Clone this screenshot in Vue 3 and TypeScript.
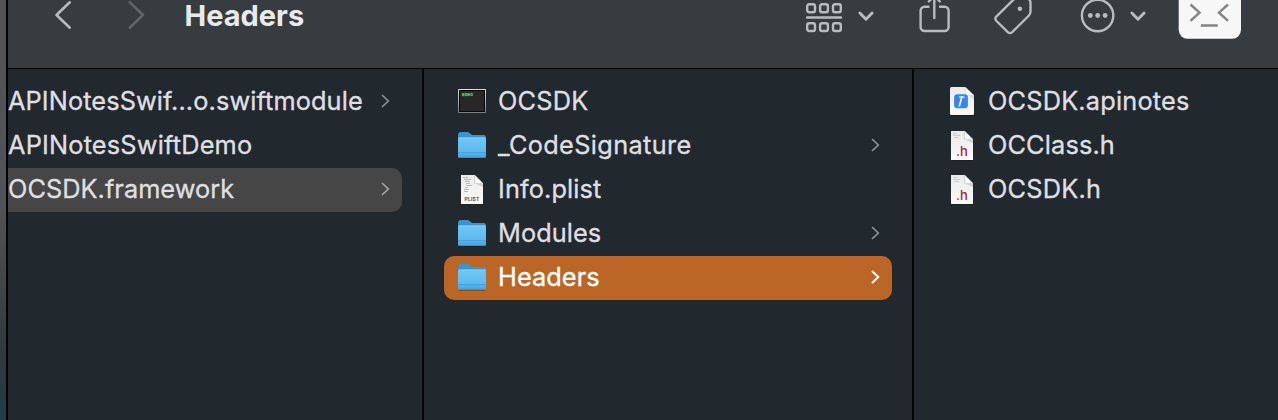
<script setup lang="ts">
type IconKind = 'exec' | 'folder' | 'plist' | 'api' | 'header'

interface Entry {
  name: string
  icon?: IconKind
  arrow?: boolean
  state?: 'path' | 'active'
  spacing: number
}

const columns: { id: string; entries: Entry[] }[] = [
  {
    id: 'first',
    entries: [
      { name: 'APINotesSwif...o.swiftmodule', arrow: true, spacing: 0.11 },
      { name: 'APINotesSwiftDemo', spacing: 0.2 },
      { name: 'OCSDK.framework', arrow: true, state: 'path', spacing: 0.05 },
    ],
  },
  {
    id: 'second',
    entries: [
      { name: 'OCSDK', icon: 'exec', spacing: 0.25 },
      { name: '_CodeSignature', icon: 'folder', arrow: true, spacing: 0.36 },
      { name: 'Info.plist', icon: 'plist', spacing: 0.12 },
      { name: 'Modules', icon: 'folder', arrow: true, spacing: 0.06 },
      { name: 'Headers', icon: 'folder', arrow: true, state: 'active', spacing: 0.08 },
    ],
  },
  {
    id: 'third',
    entries: [
      { name: 'OCSDK.apinotes', icon: 'api', spacing: 0.21 },
      { name: 'OCClass.h', icon: 'header', spacing: 0.15 },
      { name: 'OCSDK.h', icon: 'header', spacing: 0.25 },
    ],
  },
]
</script>

<template>
  <div class="desktop">
    <svg class="defs" width="0" height="0" aria-hidden="true">
      <defs>
        <linearGradient id="folderFront" x1="0" y1="0" x2="0" y2="1">
          <stop offset="0" stop-color="#72c8f7" />
          <stop offset=".7" stop-color="#5db9ee" />
          <stop offset="1" stop-color="#439fd8" />
        </linearGradient>
        <linearGradient id="paper" x1="0" y1="0" x2="0" y2="1">
          <stop offset="0" stop-color="#eaeaea" />
          <stop offset="1" stop-color="#fafafa" />
        </linearGradient>
        <linearGradient id="bezel" x1="0" y1="0" x2="0" y2="1">
          <stop offset="0" stop-color="#d5e0e3" />
          <stop offset="1" stop-color="#7b7f80" />
        </linearGradient>
      </defs>
    </svg>
    <div class="window">
      <header class="toolbar">
        <svg class="nav back" width="20" height="32" viewBox="0 0 20 32"><path d="M15.8 2.3 2.500 15l13.3 12.7" /></svg>
        <svg class="nav forward" width="20" height="32" viewBox="0 0 20 32"><path d="M3.7 2.3 17 15 3.7 27.7" /></svg>
        <h1 class="title">Headers</h1>
        <svg class="tool group" width="70" height="36" viewBox="0 0 70 36">
          <rect x="1.2" y="4.2" width="7.8" height="8" rx="2" />
          <rect x="14.1" y="4.2" width="7.8" height="8" rx="2" />
          <rect x="27" y="4.2" width="7.8" height="8" rx="2" />
          <path d="M1 17.5h34" />
          <rect x="1.2" y="23.2" width="7.8" height="7.8" rx="2" />
          <rect x="14.1" y="23.2" width="7.8" height="7.8" rx="2" />
          <rect x="27" y="23.2" width="7.8" height="7.8" rx="2" />
          <path class="caret" d="m53.9 13 6.1 6.2 6.1-6.2" />
        </svg>
        <svg class="tool share" width="32" height="36" viewBox="0 0 32 36">
          <path d="M9.5 6.8H5.6A4 4 0 0 0 1.6 10.8V27a4 4 0 0 0 4 4h20a4 4 0 0 0 4-4V10.800a4 4 0 0 0-4-4H21M15.300 18V-4M9.800 1.500l5.500-5.500 5.500 5.500" />
        </svg>
        <svg class="tool tag" width="42" height="36" viewBox="0 0 42 36">
          <path d="M3.500 16.300 20.800-.6Q23-2.500 26-2.500h5.500Q37.500-2 37.500 3v8.500q0 2.500-2 4.500L19.200 32.100q-2.200 2-4.400 0L3.500 21q-2.200-2.300 0-4.700Z" />
          <circle class="dot" cx="26.900" cy="8.700" r="2.300" />
        </svg>
        <svg class="tool more" width="70" height="36" viewBox="0 0 70 36">
          <circle cx="17.600" cy="15.500" r="15.700" />
          <circle class="dot" cx="10.300" cy="15.500" r="2.400" />
          <circle class="dot" cx="17.700" cy="15.500" r="2.400" />
          <circle class="dot" cx="25.100" cy="15.500" r="2.400" />
          <path class="caret" d="m51.900 13 6.100 6.200 6.100-6.200" />
        </svg>
        <svg class="terminal" width="64" height="42" viewBox="0 0 64 42">
          <rect x=".7" y="-16" width="62.300" height="54.800" rx="9" fill="#f7f7f7" />
          <path d="m12.500 4.500 9 8.200-9 8.200M50 4.500l-9 8.200 9 8.200M22.800 25.500h17" />
        </svg>
      </header>
      <main class="browser">
        <section v-for="column in columns" :key="column.id" class="column" :class="column.id">
          <div v-for="entry in column.entries" :key="entry.name" class="row" :class="entry.state">
            <svg v-if="entry.icon" class="icon" width="32" height="32" viewBox="0 0 32 32">
              <g v-if="entry.icon === 'exec'">
                <rect x="2" y="4" width="28" height="24" rx=".7" fill="url(#bezel)" />
                <rect x="3" y="5" width="26" height="22" fill="#080808" />
                <rect x="4" y="6" width="24" height="20" fill="#272727" />
                <text x="5.700" y="10.900" class="exec-text">exec</text>
              </g>
              <g v-else-if="entry.icon === 'folder'">
                <path class="shadow" d="M3 29.300h26" />
                <path d="M2 5.500Q2 3 4.300 3h7.100q1 0 1.800.7l1.800 1.600q.8.600 2 .600h10.500Q30 5.900 30 8.400V20H2Z" fill="#3a94cf" />
                <path d="M2 10.200Q2 8.500 3.700 8.500h24.600Q30 8.500 30 10.200v16.900Q30 29 28.100 29H3.900Q2 29 2 27.100Z" fill="url(#folderFront)" />
                <path d="M2.400 9h27.200" stroke="#8bd4fa" stroke-width=".7" />
                <path d="M2 23.500h28" stroke="#45a2dc" stroke-width="1" />
                <path d="M2 28.500h28" stroke="#378cc3" stroke-width=".7" />
              </g>
              <g v-else-if="entry.icon === 'api'">
                <path class="shadow" d="M5 30.400h22" />
                <path d="M5.500 2h13.500L28 10.500v18Q28 30 26.500 30h-21Q4 30 4 28.500v-25Q4 2 5.500 2Z" fill="url(#paper)" />
                <path d="M19 6.500 28 11v4Z" fill="#d8d8d8" />
                <path d="M19.500 2.200 28 10.500h-8.500Z" fill="#fcfcfc" stroke="#c4c4c4" stroke-width=".4" />
                <rect x="8.100" y="9.200" width="13.800" height="14" rx="3.300" fill="#3884ed" />
                <path d="m15.900 12-2.500 8.800" stroke="#fff" stroke-width="1.700" stroke-linecap="round" />
                <path d="M13 12.300q2.500-1.300 5.800.1" stroke="#d5e5fb" stroke-width="1.100" fill="none" />
              </g>
              <g v-else>
                <path class="shadow" d="M5 31h22" />
                <path d="M5 2h13.600L27 10.400V31H5Z" fill="url(#paper)" />
                <path d="M18 2.600 27 11v3l-9-4Z" fill="#cfcfcf" />
                <path d="M18.600 2 27 10.400h-8.400Z" fill="#fcfcfc" stroke="#bababa" stroke-width=".4" />
                <g v-if="entry.icon === 'plist'">
                  <path d="M7 4.500h5M8 6.500h7M9 8.500h5M10 10.500h4M10 12.500h6M9 14.500h3M8 16.500h5M8 18.500h4" stroke="#b0b0b0" stroke-width=".9" />
                  <text x="16" y="28" text-anchor="middle" class="plist-text">PLIST</text>
                </g>
                <g v-else>
                  <path d="M7 4.500h4M7 6.500h7M8 8.500h5" stroke="#c6c6c6" stroke-width=".8" />
                  <text x="16" y="27" text-anchor="middle" class="header-text">.h</text>
                </g>
              </g>
            </svg>
            <span class="name" :style="{ letterSpacing: entry.spacing + 'px' }">{{ entry.name }}</span>
            <svg v-if="entry.arrow" class="arrow" width="10" height="16" viewBox="0 0 10 16"><path d="m2.500 2.500 5.800 5.500-5.800 5.500" /></svg>
          </div>
        </section>
      </main>
    </div>
  </div>
</template>

<style>
body { background: #21282e; overflow: hidden; }
</style>

<style scoped>
.desktop {
  box-sizing: border-box;
  width: 1278px;
  height: 420px;
  padding-left: 6px;
  overflow: hidden;
  background: linear-gradient(#505355 0, #505355 210px, #3f4548 290px, #30393d 350px, #253a43 400px, #263b44);
  font-family: Inter, "Liberation Sans", sans-serif;
}
.defs { position: absolute; }
.window {
  box-sizing: border-box;
  height: 420px;
  border-left: 2px solid #000;
  background: #21282e;
  display: flex;
  flex-direction: column;
}
.toolbar {
  box-sizing: border-box;
  flex: none;
  height: 69px;
  border-bottom: 1px solid #000;
  background: #373c40;
  display: flex;
  align-items: flex-start;
}
.toolbar svg { flex: none; fill: none; stroke-linecap: round; stroke-linejoin: round; }
.nav { stroke-width: 2.600; stroke: #b7bbbf; }
.back { margin-left: 46px; }
.forward { margin-left: 52px; stroke: #5f6467; }
.title {
  margin: 0 0 0 38.500px;
  width: 621.500px;
  color: #e9eaea;
  font-size: 29px;
  font-weight: 700;
  line-height: 32px;
  letter-spacing: 0;
}
.tool { stroke: #b8bcbf; stroke-width: 2.400; }
.tool .caret { stroke-width: 3; }
.tool .dot { fill: #b8bcbf; stroke: none; }
.share { margin-left: 43px; }
.tag { margin-left: 42px; }
.more { margin-left: 45px; }
.terminal { margin-left: 28px; }
.terminal path { stroke: #858585; stroke-width: 2.500; stroke-linecap: butt; stroke-linejoin: miter; }
.browser { flex: 1; display: flex; }
.column { box-sizing: border-box; padding-top: 11px; flex: none; }
.first { width: 416px; border-right: 2px solid #000; padding-right: 20px; }
.second { width: 490px; border-right: 2px solid #000; padding-left: 20px; padding-right: 20px; }
.third { flex: 1; padding-left: 20px; }
.row {
  box-sizing: border-box;
  height: 44px;
  display: flex;
  align-items: center;
  padding: 0 12px;
  border-radius: 10px;
  color: #dedfe0;
}
.first .row { padding-left: 0; border-radius: 0 10px 10px 0; }
.row.path { background: #464646; }
.row.active { background: #bb6526; color: #fff; }
.icon { flex: none; margin: -2px 10px 0 0; }
.name { font-size: 25.300px; line-height: 44px; margin-top: -2px; white-space: pre; -webkit-text-stroke: 0.350px currentColor; }
.arrow { margin-left: auto; margin-top: -2px; flex: none; fill: none; stroke: #8d9194; stroke-width: 1.700; stroke-linecap: round; }
.path .arrow { stroke: #a5a5a5; }
.active .arrow { stroke: #fff; stroke-width: 2; }
.shadow { stroke: #000; stroke-opacity: .3; stroke-width: 1; }
.exec-text { font: bold 4.700px "Liberation Mono", monospace; fill: #5fd05c; stroke: #5fd05c; stroke-width: .25; }
.plist-text { font: bold 4.900px Inter, sans-serif; letter-spacing: .2px; fill: #4d4d4d; }
.header-text { font: 500 13px Inter, sans-serif; fill: #b01f24; }
</style>
